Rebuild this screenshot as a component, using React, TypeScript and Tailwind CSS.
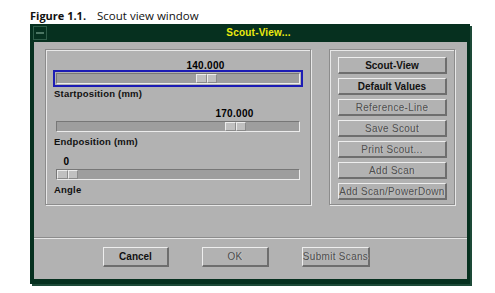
import React from "react";

const font = { fontFamily: '"Liberation Sans", Arial, sans-serif' };

interface SliderDef {
  value: string;
  label: string;
  pos: number;
  focused?: boolean;
}

const sliders: SliderDef[] = [
  { value: "140.000", label: "Startposition (mm)", pos: 139, focused: true },
  { value: "170.000", label: "Endposition (mm)", pos: 168 },
  { value: "0", label: "Angle", pos: 0 },
];

const sideButtons = [
  { text: "Scout-View", enabled: true },
  { text: "Default Values", enabled: true },
  { text: "Reference-Line", enabled: false },
  { text: "Save Scout", enabled: false },
  { text: "Print Scout...", enabled: false },
  { text: "Add Scan", enabled: false },
  { text: "Add Scan/PowerDown", enabled: false },
];

function Slider({ s }: { s: SliderDef }) {
  return (
    <div className="flex flex-col">
      {/* value above thumb */}
      <div className="h-[12px] pl-[10px]">
        <div style={{ paddingLeft: s.pos }}>
          <div className="w-[21px] flex justify-center whitespace-nowrap text-[10px] font-bold leading-[12px] text-black tracking-[0.3px]">
            {s.value}
          </div>
        </div>
      </div>
      {/* trough */}
      <div className="mx-[10px] mt-[1px]">
        <div
          className={
            "h-[11px] bg-[#9e9e9e] border-t border-l border-[#777] border-b border-b-[#ececec] border-r border-r-[#ececec] flex " +
            (s.focused ? "outline-2 outline-[#1c1cb4] outline-offset-[1px]" : "")
          }
          style={{ paddingLeft: s.pos }}
        >
          <div className="flex h-full w-[21px]">
            <div className="flex-1 bg-[#c0c0c0] border-t border-l border-[#ececec] border-b border-r border-b-[#8a8a8a] border-r-[#8a8a8a]" />
            <div className="flex-1 bg-[#c0c0c0] border-t border-l border-[#ececec] border-b border-r border-b-[#8a8a8a] border-r-[#8a8a8a]" />
          </div>
        </div>
      </div>
      <div className="pl-[8px] mt-[3px] h-[13px] text-[9.5px] font-bold leading-[13px] text-[#111] tracking-[0.2px]">
        {s.label}
      </div>
    </div>
  );
}

function MotifButton({
  text,
  enabled,
  className,
}: {
  text: string;
  enabled: boolean;
  className: string;
}) {
  return (
    <div
      className={
        "flex items-center justify-center bg-[#b2b2b2] border-t border-l border-[#eeeeee] border-b-2 border-r-2 border-b-[#6e6e6e] border-r-[#6e6e6e] whitespace-nowrap text-[10px] " +
        (enabled
          ? "font-bold text-[#111]"
          : "text-[#4e4e4e] [text-shadow:1px_0_0_#c6c6c6] tracking-[0.3px]") +
        " " +
        className
      }
    >
      {text}
    </div>
  );
}

export default function App() {
  return (
    <div className="w-[495px] h-[293px] bg-white overflow-hidden" style={font}>
      {/* caption */}
      <div
        className="pl-[30px] pt-[8px] h-[24px] flex items-start leading-[15px] text-[#111]"
        style={{ fontFamily: '"Open Sans", "Liberation Sans", sans-serif' }}
      >
        <span className="font-bold text-[11px]">Figure 1.1.</span>
        <span className="ml-[11px] text-[11.5px]">Scout view window</span>
      </div>

      {/* window */}
      <div className="ml-[30px] w-[440px] bg-[#06301f] shadow-[2px_2px_0_#1d4a38]">
        {/* title bar */}
        <div className="h-[18px] flex items-center">
          <div className="ml-[3px] w-[14px] h-[14px] border border-[#2f5c48] flex items-center justify-center">
            <div className="w-[8px] h-[2px] bg-[#4b7562]" />
          </div>
          <div className="flex-1 text-center text-[10px] font-bold text-[#eaea10] leading-[18px] tracking-[0.2px]">
            Scout-View...
          </div>
        </div>

        {/* body */}
        <div className="px-[4px] pr-[3px] pb-[5px]">
          <div className="bg-[#b2b2b2] h-[237px] flex flex-col">
            <div className="flex pl-[11px] pt-[7px] h-[195px]">
              {/* left panel */}
              <div className="w-[266px] h-[156px] border border-[#8c8c8c] shadow-[inset_1px_1px_0_#e8e8e8,1px_1px_0_#e8e8e8] pt-[10px] flex flex-col gap-[8px]">
                {sliders.map((s) => (
                  <Slider key={s.label} s={s} />
                ))}
              </div>

              {/* right panel */}
              <div className="ml-[18px] w-[126px] h-[156px] border border-[#8c8c8c] shadow-[inset_1px_1px_0_#e8e8e8,1px_1px_0_#e8e8e8] pt-[7px] pl-[8px] flex flex-col gap-[4px]">
                {sideButtons.map((b) => (
                  <MotifButton
                    key={b.text}
                    text={b.text}
                    enabled={b.enabled}
                    className="w-[109px] h-[17px]"
                  />
                ))}
              </div>
            </div>

            {/* separator */}
            <div className="h-[2px] border-t border-[#8c8c8c] bg-[#e6e6e6]" />

            {/* footer */}
            <div className="flex pl-[69px] pt-[8px] gap-[33px]">
              <MotifButton text="Cancel" enabled className="w-[66px] h-[20px]" />
              <MotifButton text="OK" enabled={false} className="w-[67px] h-[20px]" />
              <MotifButton text="Submit Scans" enabled={false} className="w-[68px] h-[20px]" />
            </div>
          </div>
        </div>
      </div>
    </div>
  );
}
